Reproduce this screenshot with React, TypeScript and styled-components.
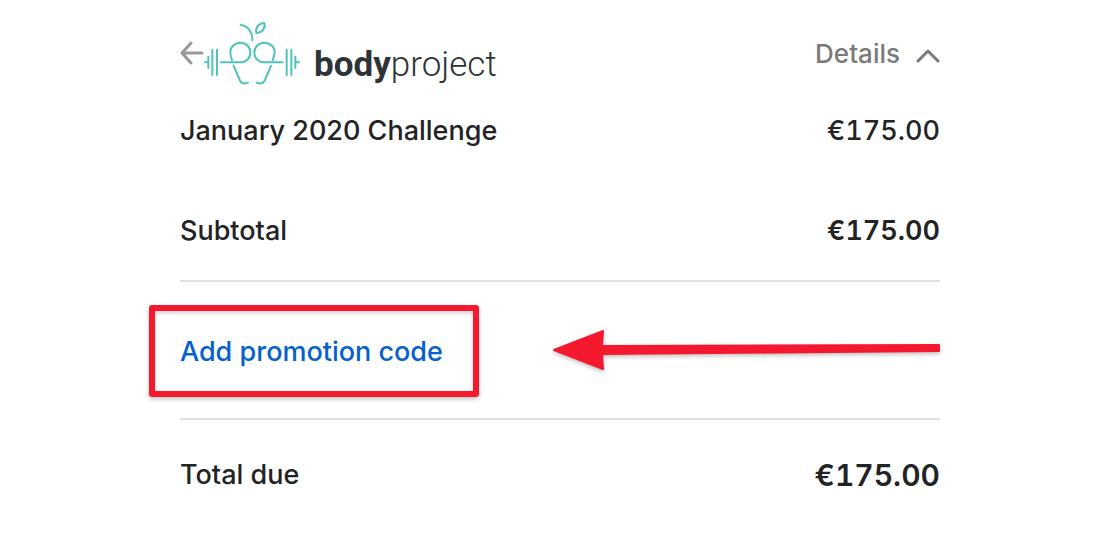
import React from "react";
import styled, { createGlobalStyle } from "styled-components";

const GlobalStyle = createGlobalStyle`
  * { box-sizing: border-box; }
  body {
    margin: 0;
    background: #fff;
    color: #222325;
    font-family: Inter, "Liberation Sans", sans-serif;
  }
`;

const Page = styled.main`
  padding: 20px 178px 40px 180px;
`;

const Header = styled.header`
  display: flex;
  align-items: center;
  height: 68px;
`;

const PlainButton = styled.button`
  display: flex;
  align-items: center;
  padding: 0;
  border: 0;
  background: none;
  font-family: inherit;
  font-size: 27px;
  font-weight: 500;
  line-height: 34px;
  white-space: nowrap;
  cursor: pointer;
`;

const BackButton = styled(PlainButton)`
  align-self: flex-start;
  height: 68px;
  padding-bottom: 2px;
`;

const DetailsButton = styled(PlainButton)`
  gap: 16px;
  margin-left: auto;
  color: #7a7a7a;
  font-size: 26px;
`;

const Brand = styled.a`
  display: flex;
  align-items: center;
  gap: 14px;
  color: #2d3336;
  text-decoration: none;
`;

const Wordmark = styled.span`
  padding-top: 22px;
  font-family: Roboto, "Liberation Sans", sans-serif;
  font-size: 35px;
  font-weight: 300;
  line-height: 40px;

  b { font-weight: 700; }
`;

const Row = styled.div<{ $gap: number }>`
  display: flex;
  align-items: center;
  justify-content: space-between;
  padding-top: ${(p) => p.$gap}px;
  font-size: 27px;
  font-weight: 500;
  line-height: 34px;
`;

const Amount = styled.span<{ $large?: boolean; $strong?: boolean }>`
  font-size: ${(p) => (p.$large ? 30 : 27)}px;
  font-weight: ${(p) => (p.$strong ? 600 : 500)};
  font-variant-numeric: tabular-nums;
`;

const PromoRow = styled.div`
  display: flex;
  align-items: center;
  justify-content: space-between;
  height: 140px;
  margin-top: 32px;
  border-top: 2px solid #e0e0e0;
  border-bottom: 2px solid #e0e0e0;
`;

const Marked = styled.div`
  position: relative;
  padding-top: 4px;
`;

const Highlight = styled.div`
  position: absolute;
  inset: -26px -36px -28px -31px;
  border: 6px solid #f5192f;
  border-radius: 3px;
  box-shadow: 0 2px 4px rgba(0, 0, 0, 0.25), inset 0 2px 4px rgba(0, 0, 0, 0.2);
  pointer-events: none;
`;

const PromoButton = styled(PlainButton)`
  color: #0560d0;
`;

const Pointer = styled.svg`
  display: block;
  overflow: visible;
  filter: drop-shadow(0 2px 2px rgba(0, 0, 0, 0.25));
`;

const BackIcon = () => (
  <svg width="24" height="24" viewBox="0 0 24 24" fill="none" stroke="#999" strokeWidth="3" strokeLinecap="round" strokeLinejoin="round" aria-hidden="true">
    <path d="M22 12H2M11 2L2 12L11 22" />
  </svg>
);

const ChevronIcon = () => (
  <svg width="24" height="24" viewBox="0 0 24 24" fill="none" stroke="#7a7a7a" strokeWidth="3" strokeLinecap="round" strokeLinejoin="round" aria-hidden="true">
    <path d="M2 19L12 9L22 19" />
  </svg>
);

const BrandMark = () => (
  <svg width="96" height="68" viewBox="102 30 288 204" fill="none" stroke="#4fc3bc" strokeWidth="6" strokeLinecap="round" aria-hidden="true">
    <path d="M105 157H114M115 140V174M127 119V195M141 119V195" />
    <path d="M387 157H377M376 140V174M364 119V195M350 119V195" />
    <path d="M153 157H211C229 157 241 144 241 128C241 111 228 98 211 98C194 98 181 111 181 126C181 135 183 143 186 150" />
    <path d="M338 157H283C265 157 253 144 253 128C253 111 266 98 283 98C300 98 314 111 314 126C314 135 311 143 308 150" />
    <path d="M191 167L209 210C213 220 222 223 234 218" />
    <path d="M303 167L285 210C281 220 272 223 260 218" />
    <path d="M212 45C233 47 248 66 247 91" />
    <path d="M283 39C267 40 255 52 259 69C276 68 288 55 283 39Z" strokeLinejoin="round" />
  </svg>
);

export default function App() {
  return (
    <>
      <GlobalStyle />
      <Page>
        <Header>
          <BackButton type="button" aria-label="Back">
            <BackIcon />
          </BackButton>
          <Brand href="#">
            <BrandMark />
            <Wordmark>
              <b>body</b>project
            </Wordmark>
          </Brand>
          <DetailsButton type="button" aria-expanded="true">
            Details
            <ChevronIcon />
          </DetailsButton>
        </Header>
        <Row $gap={26}>
          <span>January 2020 Challenge</span>
          <Amount>€175.00</Amount>
        </Row>
        <Row $gap={66}>
          <span>Subtotal</span>
          <Amount $strong>€175.00</Amount>
        </Row>
        <PromoRow>
          <Marked>
            <PromoButton type="button">Add promotion code</PromoButton>
            <Highlight />
          </Marked>
          <Pointer width="388" height="42" viewBox="0 0 388 42" fill="#f5192f" stroke="#f5192f" strokeWidth="2" strokeLinejoin="round" aria-hidden="true">
            <path d="M2 21L51 2L50 17L387 16V22L50 25L51 40Z" />
          </Pointer>
        </PromoRow>
        <Row $gap={38}>
          <span>Total due</span>
          <Amount $large $strong>€175.00</Amount>
        </Row>
      </Page>
    </>
  );
}
